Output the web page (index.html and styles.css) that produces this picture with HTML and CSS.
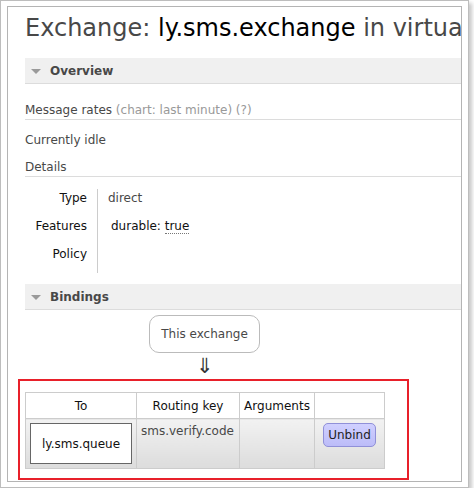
FILE: index.html
```html
<!DOCTYPE html>
<html>
<head>
<meta charset="utf-8">
<link rel="stylesheet" href="styles.css">
</head>
<body>
<div class="shot">
  <div class="page">
    <h1>Exchange: <b>ly.sms.exchange</b> in virtual host /leyou</h1>

    <div class="section-head"><span class="tri"></span>Overview</div>
    <div class="rates">Message rates <span class="muted">(chart: last minute) (?)</span></div>
    <div class="idle">Currently idle</div>
    <div class="details-h">Details</div>
    <table class="facts">
      <tr><th>Type</th><td>direct</td></tr>
      <tr><th>Features</th><td><span class="feat">durable: <abbr>true</abbr></span></td></tr>
      <tr><th>Policy</th><td></td></tr>
    </table>

    <div class="section-head section-head-b"><span class="tri"></span>Bindings</div>
    <div class="bindings">
      <div class="exch">This exchange</div>
      <div class="arrow">⇓</div>
      <div class="mark">
        <table class="list">
          <colgroup><col class="c1"><col class="c2"><col class="c3"><col class="c4"></colgroup>
          <tr><th>To</th><th>Routing key</th><th>Arguments</th><th></th></tr>
          <tr class="row">
            <td><span class="queue">ly.sms.queue</span></td>
            <td class="key">sms.verify.code</td>
            <td></td>
            <td class="act"><button class="unbind">Unbind</button></td>
          </tr>
        </table>
      </div>
    </div>
  </div>
</div>
</body>
</html>
```
FILE: styles.css
```css
body {
  margin: 0;
  background: #fff;
  font-family: "DejaVu Sans", Verdana, sans-serif;
  font-size: 12px;
  color: #484848;
}
.shot {
  width: 455px;
  height: 476px;
  padding: 5px 6px;
  border: 1px solid #bdbdbd;
  box-shadow: 3px 3px 4px rgba(0, 0, 0, 0.22);
}
.page {
  box-sizing: border-box;
  width: 455px;
  height: 476px;
  border: 1px solid #b4b4b4;
  padding-left: 17px;
  overflow: hidden;
}
h1 {
  margin: 7px 0 0;
  font-size: 24px;
  line-height: 28px;
  font-weight: normal;
  white-space: nowrap;
  overflow: hidden;
  color: #484848;
}
h1 b {
  font-weight: normal;
  color: #000;
}
.section-head {
  margin-top: 16px;
  height: 25px;
  border-bottom: 1px solid #dcdcdc;
  background: #f0f0f0;
  display: flex;
  align-items: center;
  padding-left: 6px;
  font-weight: bold;
  color: #484848;
}
.section-head-b {
  margin-top: 11px;
}
.tri {
  width: 0;
  height: 0;
  border-left: 5px solid transparent;
  border-right: 5px solid transparent;
  border-top: 5px solid #9a9a9a;
  margin-right: 9px;
  margin-top: 1px;
}
.rates {
  margin-top: 18px;
  line-height: 16px;
  padding-bottom: 1px;
  border-bottom: 1px solid #dcdcdc;
}
.muted { color: #999; }
.idle {
  margin-top: 12px;
  line-height: 16px;
}
.details-h {
  margin-top: 11px;
  line-height: 16px;
  padding-bottom: 1px;
  border-bottom: 1px solid #dcdcdc;
}
.facts {
  margin-top: 12px;
  border-collapse: collapse;
  line-height: 16px;
}
.facts th {
  width: 62px;
  text-align: right;
  font-weight: normal;
  color: #111;
  padding: 1px 10px 11px 0;
  border-right: 1px solid #ccc;
}
.facts td {
  padding: 1px 10px 11px 10px;
  color: #484848;
}
.feat {
  margin-left: 3px;
  color: #111;
}
abbr {
  text-decoration: none;
  border-bottom: 1px dotted #777;
}
.bindings {
  width: 359px;
  text-align: center;
  padding-top: 5px;
}
.exch {
  display: inline-block;
  line-height: 16px;
  padding: 10px 11px;
  border: 1px solid #bbb;
  border-radius: 10px;
}
.arrow {
  font-size: 21px;
  line-height: 26px;
  color: #333;
}
.mark {
  margin: 0 -25px 0 -7px;
  border: 2px solid #e8202a;
  padding: 11px 23px 9px 5px;
}
.list {
  width: 359px;
  table-layout: fixed;
  border-collapse: collapse;
  line-height: 16px;
}
.c1 { width: 111px; }
.c2 { width: 103px; }
.c3 { width: 75px; }
.c4 { width: 70px; }
.list th, .list td {
  border: 1px solid #ccc;
}
.list th {
  font-weight: normal;
  color: #111;
  padding: 5px 0 4px;
  white-space: nowrap;
}
.row td {
  background: linear-gradient(#f2f2f2, #dcdcdc);
  vertical-align: top;
  padding: 4px;
}
.queue {
  display: block;
  background: #fff;
  border: 1px solid #666;
  padding: 12px 0 11px;
  color: #111;
}
.key {
  text-align: left;
  color: #484848;
}
.act { text-align: center; }
.unbind {
  box-sizing: border-box;
  height: 24px;
  font-family: "DejaVu Sans", Verdana, sans-serif;
  font-size: 12px;
  line-height: 16px;
  color: #222;
  padding: 3px 4px;
  border: 1px solid #9090d8;
  border-radius: 5px;
  background: linear-gradient(#d0d0ff, #bcbcf8);
}
```
